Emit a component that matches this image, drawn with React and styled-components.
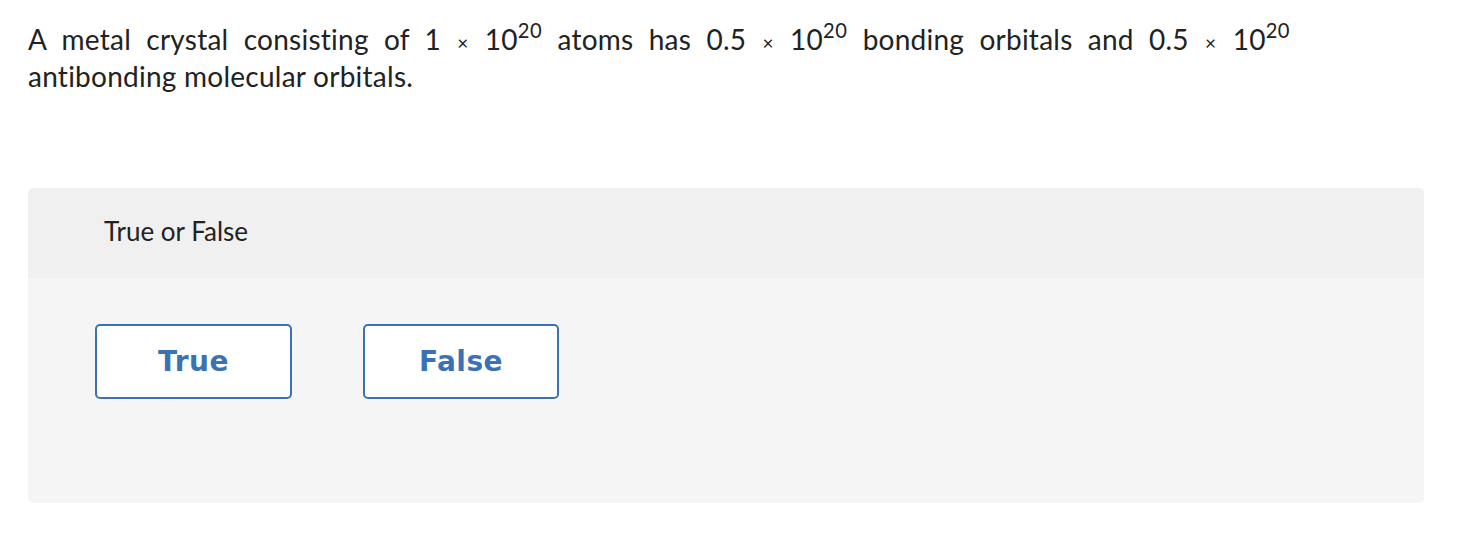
import React from "react";
import styled, { createGlobalStyle } from "styled-components";

const GlobalStyle = createGlobalStyle`
  html, body {
    margin: 0;
    padding: 0;
    background: #ffffff;
  }
  body {
    font-family: Lato, "Open Sans", "Liberation Sans", sans-serif;
    color: #222;
  }
`;

const Page = styled.div`
  padding: 21px 38px 30px 28px;
`;

const Question = styled.p`
  margin: 0;
  max-width: 1262px;
  font-size: 28px;
  line-height: 37px;
  letter-spacing: 0.25px;
  font-variant-ligatures: none;
  text-align: justify;
  color: #222;

  sup {
    font-size: 0.72em;
    line-height: 0;
    vertical-align: 0.6em;
    letter-spacing: 0.5px;
  }
`;

const Times = styled.span`
  font-size: 0.68em;
  line-height: 1;
  padding: 0 1px;
`;

const Panel = styled.section`
  margin-top: 93px;
  border-radius: 5px;
  overflow: hidden;
  background: #f5f5f5;
  height: 315px;
  display: flex;
  flex-direction: column;
`;

const PanelHeader = styled.div`
  height: 90px;
  background: #f0f0f0;
  display: flex;
  align-items: center;
  padding: 0 0 4px 76px;
  box-sizing: border-box;
  font-size: 26px;
  color: #222;
`;

const Choices = styled.div`
  display: flex;
  gap: 71px;
  padding: 46px 0 0 67px;
`;

const ChoiceButton = styled.button`
  width: ${(p) => p.$w}px;
  height: 75px;
  background: #fff;
  border: 2px solid #3a72b5;
  border-radius: 5px;
  font-family: "DejaVu Sans", Lato, sans-serif;
  font-weight: 700;
  font-size: 28px;
  letter-spacing: 0.5px;
  color: #3a72b5;
  cursor: pointer;
  padding: 0;
`;

const Sci = ({ base }) => (
  <>
    {base} <Times>×</Times> 10<sup>20</sup>
  </>
);

export default function App() {
  return (
    <>
      <GlobalStyle />
      <Page>
        <Question>
          A metal crystal consisting of <Sci base="1" /> atoms has{" "}
          <Sci base="0.5" /> bonding orbitals and <Sci base="0.5" /> antibonding
          molecular orbitals.
        </Question>
        <Panel>
          <PanelHeader>True or False</PanelHeader>
          <Choices>
            <ChoiceButton $w={197}>True</ChoiceButton>
            <ChoiceButton $w={196}>False</ChoiceButton>
          </Choices>
        </Panel>
      </Page>
    </>
  );
}
